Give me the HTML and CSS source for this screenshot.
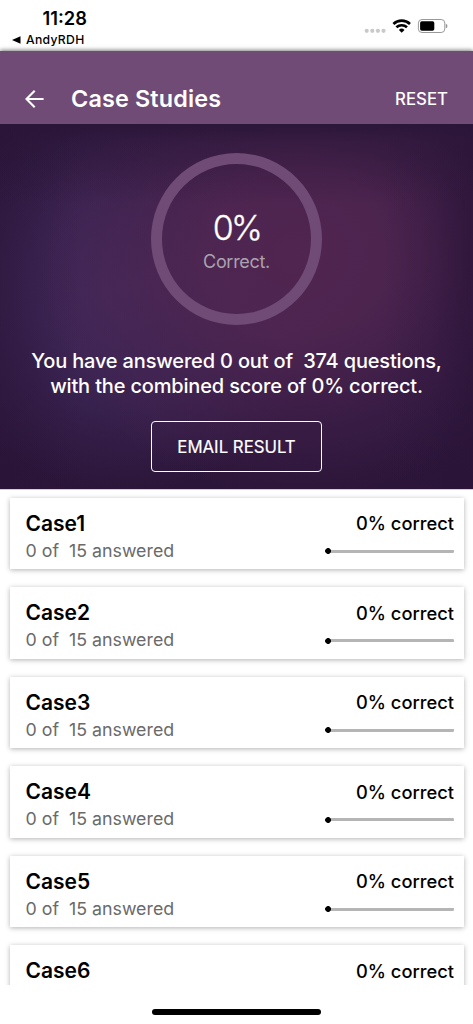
FILE: index.html
```html
<!DOCTYPE html>
<html lang="en">
<head>
<meta charset="utf-8">
<title>Case Studies</title>
<link rel="stylesheet" href="styles.css">
</head>
<body>
<div class="screen">
  <header class="status">
    <div class="status-left">
      <span class="time">11:28</span>
      <span class="back-app"><svg width="9" height="8" viewBox="0 0 9 8"><path d="M0 4 8.5 0.2v7.6z"/></svg><span>AndyRDH</span></span>
    </div>
    <div class="status-right">
      <svg width="84" height="18" viewBox="0 0 84 18">
        <g fill="#c9c9c9"><circle cx="2.7" cy="12.8" r="2.1"/><circle cx="8.3" cy="12.8" r="2.1"/><circle cx="13.9" cy="12.8" r="2.1"/><circle cx="19.5" cy="12.8" r="2.1"/></g>
        <g fill="none" stroke="#000" stroke-width="2.6"><path d="M29.4 6a12 12 0 0 1 16.6 0"/><path d="M32.4 9.3a7.8 7.8 0 0 1 10.6 0"/></g>
        <path d="M37.7 14.7 34.9 11.9a4 4 0 0 1 5.6 0z"/>
        <rect x="54.4" y="1.5" width="26.4" height="13" rx="3.6" fill="none" stroke="#999"/>
        <rect x="56.1" y="3.2" width="14.2" height="9.6" rx="1.8"/>
        <path d="M81.8 5.7c2.2.7 2.2 3.9 0 4.6z" fill="#999"/>
      </svg>
    </div>
  </header>
  <nav class="bar">
    <svg class="arrow" width="20" height="18" viewBox="0 0 20 18" fill="none" stroke="#fff" stroke-width="2.1"><path d="M18.6 9H1.4M9.7.8 1.5 9l8.2 8.2"/></svg>
    <h1 class="title">Case Studies</h1>
    <span class="reset">RESET</span>
  </nav>
  <section class="hero">
    <div class="ring"><span class="score">0%</span><span class="score-label">Correct.</span></div>
    <p class="summary"><span class="line one">You have answered 0 out of&nbsp; 374 questions,</span><span class="line two">with the combined score of 0% correct.</span></p>
    <div class="email">EMAIL RESULT</div>
  </section>
  <main class="list">
    <article class="card"><div class="row"><h2 class="name">Case1</h2><span class="pct">0% correct</span></div><div class="row detail"><span class="count">0 of&nbsp; 15 answered</span><span class="track"></span></div></article>
    <article class="card"><div class="row"><h2 class="name">Case2</h2><span class="pct">0% correct</span></div><div class="row detail"><span class="count">0 of&nbsp; 15 answered</span><span class="track"></span></div></article>
    <article class="card"><div class="row"><h2 class="name">Case3</h2><span class="pct">0% correct</span></div><div class="row detail"><span class="count">0 of&nbsp; 15 answered</span><span class="track"></span></div></article>
    <article class="card"><div class="row"><h2 class="name">Case4</h2><span class="pct">0% correct</span></div><div class="row detail"><span class="count">0 of&nbsp; 15 answered</span><span class="track"></span></div></article>
    <article class="card"><div class="row"><h2 class="name">Case5</h2><span class="pct">0% correct</span></div><div class="row detail"><span class="count">0 of&nbsp; 15 answered</span><span class="track"></span></div></article>
    <article class="card"><div class="row"><h2 class="name">Case6</h2><span class="pct">0% correct</span></div></article>
  </main>
  <footer class="home"><div class="home-bar"></div></footer>
</div>
</body>
</html>
```
FILE: styles.css
```css
* { box-sizing: border-box; }
body { margin: 0; background: #fff; color: #000; font-family: Inter, "Liberation Sans", sans-serif; }
h1, h2, p { margin: 0; }
svg { display: block; flex: none; }
.screen { width: 473px; height: 1024px; overflow: hidden; display: flex; flex-direction: column; }
.status { height: 51px; flex: none; display: flex; justify-content: space-between; padding: 8px 25px 0 12px; }
.status-left { display: flex; flex-direction: column; }
.time { font-size: 18.3px; line-height: 20px; font-weight: 600; padding-left: 30.5px; }
.back-app { display: flex; align-items: center; gap: 5px; font-size: 12.2px; line-height: 16px; margin-top: 4px; font-weight: 500; letter-spacing: 0.3px; }
.status-right { padding-top: 10px; }
.bar { height: 73px; flex: none; display: flex; align-items: center; padding: 22px 25px 0 25px; background: #6f4b75; color: #fff; box-shadow: 0 -1px 4px rgba(0,0,0,.5); }
.title { font-size: 23.4px; line-height: 28px; font-weight: 600; margin-left: 26px; letter-spacing: 0.15px; }
.reset { margin-left: auto; font-size: 16.8px; font-weight: 500; }
.hero { position: relative; height: 365px; flex: none; display: flex; flex-direction: column; align-items: center; padding-top: 29px; color: #fff;
  background:
    linear-gradient(#2b1639 0, rgba(43,22,57,.5) 18px, rgba(43,22,57,0) 80px),
    linear-gradient(to left, rgba(42,19,54,.6) 0, rgba(42,19,54,.2) 40px, rgba(42,19,54,0) 90px),
    linear-gradient(to right, rgba(42,19,54,.4) 0, rgba(42,19,54,0) 80px),
    radial-gradient(ellipse 270px 245px at 300px 130px, rgba(82,38,81,.96) 0%, rgba(80,38,81,.88) 35%, rgba(74,35,79,.5) 66%, rgba(45,21,60,0) 100%),
    radial-gradient(ellipse 205px 205px at 125px 165px, #452a5c 0%, #3c2554 42%, rgba(46,24,65,0) 100%),
    linear-gradient(#2a1538, #2c173e 70%, #2b1538); }
.ring { width: 171px; height: 172px; flex: none; border: 11.5px solid #6f4b75; border-radius: 50%; display: flex; flex-direction: column; align-items: center; padding-top: 42px; }
.score { font-size: 34px; line-height: 43px; font-weight: 300; letter-spacing: -2.8px; -webkit-text-stroke: 0.3px #fff; }
.score-label { font-size: 18px; line-height: 24px; margin-top: 1px; color: #aaa2af; letter-spacing: -0.3px; }
.summary { display: flex; flex-direction: column; align-items: center; margin-top: 24px; font-size: 20px; line-height: 25px; font-weight: 500; letter-spacing: -0.17px; }
.line { white-space: nowrap; }
.email { width: 171px; height: 51px; margin-top: 22px; border: 1px solid #fff; border-radius: 4px; display: flex; align-items: center; justify-content: center; font-size: 16.8px; font-weight: 400; -webkit-text-stroke: 0.2px #fff; }
.list { height: 496px; flex: none; overflow: hidden; display: flex; flex-direction: column; gap: 18px; padding: 7.7px 9.5px 0; border-top: 1px solid #d8cadb; }
.card { height: 71.5px; flex: none; background: #fff; box-shadow: 0 1px 5px rgba(0,0,0,.3); padding: 12px 9.5px 0 16px; }
.row { display: flex; justify-content: space-between; align-items: center; height: 27px; }
.name { font-size: 21px; font-weight: 600; }
.pct { font-size: 18.3px; font-weight: 500; }
.count { font-size: 17.8px; color: #6a6a6a; }
.track { width: 129px; height: 6px; margin-top: 2px; background: radial-gradient(circle at 3px 3px, #000 2.7px, transparent 3.2px), linear-gradient(#b5b5b5, #b5b5b5) 3px 1.5px / 126px 3px no-repeat; border-radius: 3px; }
.home { flex: 1; display: flex; justify-content: center; padding-top: 24px; }
.home-bar { width: 169px; height: 6px; border-radius: 3px; background: #000; }
```
